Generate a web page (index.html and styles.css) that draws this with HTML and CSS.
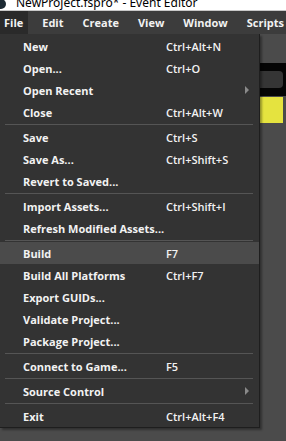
FILE: index.html
```html
<!DOCTYPE html>
<html lang="en">
<head>
    <meta charset="UTF-8">
    <meta name="viewport" content="width=device-width, initial-scale=1.0">
    <title>NewProject.fspro* - Event Editor</title>
    <link rel="stylesheet" href="styles.css">
</head>
<body>
    <div class="titlebar">
        <span class="app-icon"></span>
        <span class="title-text">NewProject.fspro* - Event Editor</span>
    </div>

    <div class="menubar">
        <div class="menubar-item active">File</div>
        <div class="menubar-item">Edit</div>
        <div class="menubar-item">Create</div>
        <div class="menubar-item">View</div>
        <div class="menubar-item">Window</div>
        <div class="menubar-item">Scripts</div>
    </div>

    <div class="workspace">
        <div class="toolbar-band">
            <div class="search-box"></div>
        </div>
        <div class="event-bar"></div>

        <div class="dropdown">
            <div class="item"><span class="label">New</span><span class="shortcut">Ctrl+Alt+N</span></div>
            <div class="item"><span class="label">Open...</span><span class="shortcut">Ctrl+O</span></div>
            <div class="item"><span class="label">Open Recent</span><span class="shortcut"></span><span class="arrow"></span></div>
            <div class="item"><span class="label">Close</span><span class="shortcut">Ctrl+Alt+W</span></div>
            <div class="separator"></div>
            <div class="item"><span class="label">Save</span><span class="shortcut">Ctrl+S</span></div>
            <div class="item"><span class="label">Save As...</span><span class="shortcut">Ctrl+Shift+S</span></div>
            <div class="item"><span class="label">Revert to Saved...</span><span class="shortcut"></span></div>
            <div class="separator"></div>
            <div class="item"><span class="label">Import Assets...</span><span class="shortcut">Ctrl+Shift+I</span></div>
            <div class="item"><span class="label">Refresh Modified Assets...</span><span class="shortcut"></span></div>
            <div class="separator"></div>
            <div class="item hover"><span class="label">Build</span><span class="shortcut">F7</span></div>
            <div class="item"><span class="label">Build All Platforms</span><span class="shortcut">Ctrl+F7</span></div>
            <div class="item"><span class="label">Export GUIDs...</span><span class="shortcut"></span></div>
            <div class="item"><span class="label">Validate Project...</span><span class="shortcut"></span></div>
            <div class="item"><span class="label">Package Project...</span><span class="shortcut"></span></div>
            <div class="separator"></div>
            <div class="item"><span class="label">Connect to Game...</span><span class="shortcut">F5</span></div>
            <div class="separator"></div>
            <div class="item"><span class="label">Source Control</span><span class="shortcut"></span><span class="arrow"></span></div>
            <div class="separator"></div>
            <div class="item"><span class="label">Exit</span><span class="shortcut">Ctrl+Alt+F4</span></div>
        </div>
    </div>
</body>
</html>
```

FILE: styles.css
```css
body {
    margin: 0;
    background-color: #4b4b4b;
    font-family: "Open Sans", "Noto Sans", sans-serif;
    color: #f2f2f2;
    height: 441px;
    overflow: hidden;
}

/* Window title */
.titlebar {
    height: 10px;
    background-color: #fff;
    border-bottom: 1px solid #c8c8c8;
    overflow: hidden;
    display: flex;
    align-items: flex-end;
    gap: 10px;
    color: #000;
}

.app-icon {
    width: 10px;
    height: 10px;
    border-radius: 50%;
    background-color: #1c2a33;
    margin-left: -4px;
    margin-bottom: 1px;
}

.title-text {
    font-family: "Noto Sans", sans-serif;
    font-size: 12px;
    line-height: 12px;
    margin-bottom: 1px;
}

/* Menu bar */
.menubar {
    height: 23px;
    background-color: #3c3c3c;
    display: flex;
    gap: 9px;
}

.menubar-item {
    font-size: 11px;
    font-weight: 700;
    line-height: 23px;
    padding: 0 5px;
}

.menubar-item:first-child {
    padding-left: 4px;
}

.menubar-item.active {
    background-color: #2a2a2a;
}

/* Editor area behind the menu */
.workspace {
    position: relative;
    padding-top: 29px;
}

.toolbar-band {
    height: 33px;
    background-color: #050505;
    display: flex;
    align-items: center;
}

.search-box {
    width: 283px;
    height: 17px;
    background-color: #353535;
    border-radius: 0 4px 4px 0;
}

.event-bar {
    margin-top: 1px;
    width: 283px;
    height: 26px;
    background-color: #e5e33f;
}

/* File dropdown */
.dropdown {
    position: absolute;
    top: 0;
    left: 0;
    width: 259px;
    padding-top: 1px;
    background-color: #333;
    border-right: 1px solid #1e1e1e;
    border-bottom: 1px solid #1e1e1e;
    box-shadow: 2px 2px 2px rgba(0, 0, 0, 0.35);
}

.item {
    display: grid;
    grid-template-columns: 143px 1fr 6px;
    align-items: center;
    height: 22px;
    padding: 0 8px 0 23px;
    font-size: 11px;
}

.item.hover {
    background-color: #4b4b4b;
}

.label {
    font-weight: 700;
    white-space: nowrap;
}

.shortcut {
    font-weight: 600;
    white-space: nowrap;
}

.arrow {
    width: 0;
    height: 0;
    border-top: 4px solid transparent;
    border-bottom: 4px solid transparent;
    border-left: 4px solid #8a8a8a;
}

.separator {
    height: 1px;
    margin: 1px 6px 1px 5px;
    background-color: #555;
}
```
